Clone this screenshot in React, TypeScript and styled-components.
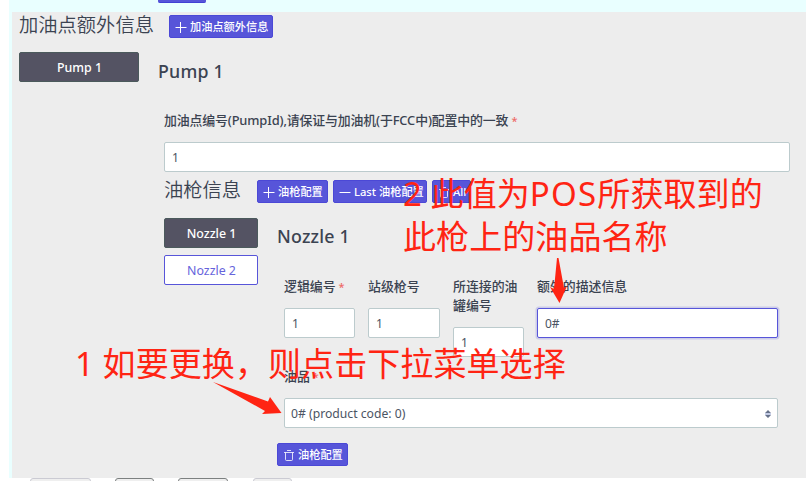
import React from "react";
import styled, { createGlobalStyle, css } from "styled-components";

const Global = createGlobalStyle`
  *, *::before, *::after { box-sizing: border-box; }
  body {
    margin: 0;
    background: #fff;
    overflow: hidden;
    font-family: "Noto Sans", "Noto Sans CJK SC", sans-serif;
    font-size: 12px;
    color: #3b4351;
  }
`;

const Page = styled.div`
  width: 806px;
  height: 481px;
  position: relative;
  overflow: hidden;
`;

const Frame = styled.div`
  margin-left: 9px;
  padding-left: 3px;
  height: 478px;
  background: #e9ffff;
`;

const TopStrip = styled.div`
  height: 12px;
  padding-left: 146px;
`;

const CutButton = styled.div`
  width: 48px;
  height: 3px;
  background: #5755d9;
  border-bottom: 1px solid #4240d4;
  border-radius: 0 0 2px 2px;
`;

const Panel = styled.main`
  height: 466px;
  background: #ededed;
  padding: 3px 0 0 7px;
`;

const TitleRow = styled.div<{ $top?: number }>`
  display: flex;
  height: 23px;
  margin-top: ${(p) => p.$top ?? 0}px;
`;

const Title = styled.h2<{ $width: number }>`
  margin: 0;
  width: ${(p) => p.$width}px;
  flex: none;
  font-family: "Noto Sans CJK SC", sans-serif;
  font-size: 19.3px;
  font-weight: 350;
  line-height: 19px;
  white-space: nowrap;
`;

const SmallButton = styled.button<{ $width: number }>`
  width: ${(p) => p.$width}px;
  height: 23px;
  flex: none;
  margin: 0 5px 0 0;
  padding: 1px 0 0 5px;
  display: flex;
  align-items: center;
  gap: 3px;
  background: #5755d9;
  border: 1px solid #4b48d6;
  border-radius: 2px;
  color: #fff;
  font: 500 11.2px/20px "Noto Sans", "Noto Sans CJK SC", sans-serif;
  white-space: nowrap;
  svg { flex: none; }
`;

const Columns = styled.div<{ $top: number }>`
  display: flex;
  margin-top: ${(p) => p.$top}px;
`;

const Tabs = styled.nav<{ $width: number }>`
  width: ${(p) => p.$width}px;
  flex: none;
  display: flex;
  flex-direction: column;
  gap: 7px;
`;

const Tab = styled.button<{ $active?: boolean }>`
  height: 30px;
  padding: 2px 0 0 1px;
  border-radius: 2px;
  font: 400 12.4px/26px "Noto Sans", sans-serif;
  ${(p) =>
    p.$active
      ? css`background: #545363; border: 1px solid #4b5a5c; color: #fff; font-weight: 500;`
      : css`background: #fff; border: 1px solid #5755d9; color: #6664dc;`}
`;

const PumpBody = styled.section`
  width: 632px;
  margin-left: 19px;
  padding-top: 6px;
`;

const NozzleBody = styled.section`
  width: 501px;
  margin-left: 19px;
  padding-top: 5px;
`;

const Heading = styled.h3`
  margin: 0;
  font: 500 17.8px/26px "Noto Sans", sans-serif;
  letter-spacing: 0.2px;
`;

const PumpFields = styled.div`
  padding: 27px 0 0 6px;
`;

const NozzleFields = styled.div`
  display: grid;
  grid-template-columns: 71px 72px 71px 241px;
  column-gap: 13px;
  height: 90px;
  margin: 28px 0 0 7px;
`;

const FieldBox = styled.label`
  display: block;
`;

const Caption = styled.span`
  display: block;
  margin-bottom: 12px;
  font-family: "Noto Sans", "Noto Sans CJK SC", sans-serif;
  font-size: 12.9px;
  font-weight: 500;
  line-height: 19px;
`;

const TightLabel = styled.span`
  letter-spacing: -0.14px;
`;

const Required = styled.span`
  color: #ee6a66;
  font-size: 11px;
`;

const Input = styled.input<{ $focus?: boolean }>`
  display: block;
  width: 100%;
  height: 30px;
  padding: 1px 7px 0;
  border: 1px solid ${(p) => (p.$focus ? "#5755d9" : "#bccbcd")};
  border-radius: 2px;
  background: #fff;
  outline: none;
  box-shadow: ${(p) => (p.$focus ? "0 0 0 1.5px rgba(87,85,217,.22)" : "none")};
  color: #4b5463;
  font: 400 12px/20px "Noto Sans", sans-serif;
`;

const ProductField = styled.div`
  margin: 0 0 0 7px;
`;

const SelectBox = styled.div`
  display: flex;
  align-items: center;
  justify-content: space-between;
  height: 30px;
  width: 494px;
  padding: 1px 6px 0;
  background: #fff;
  border: 1px solid #bccbcd;
  border-radius: 2px;
  font-size: 12.2px;
  color: #4b5463;
`;

const RemoveRow = styled.div`
  margin-top: 15px;
`;

const Footer = styled.div`
  display: flex;
  height: 3px;
  overflow: hidden;
  padding-left: 30px;
`;

const FooterButton = styled.div<{ $width: number; $gap: number; $dim?: boolean }>`
  width: ${(p) => p.$width}px;
  height: 20px;
  flex: none;
  margin-right: ${(p) => p.$gap}px;
  border: 1px solid ${(p) => (p.$dim ? "#cbcbd3" : "#7c8080")};
  border-radius: 3px;
  background: #efefef;
`;

const Note = styled.div<{ $x: number; $y: number }>`
  position: absolute;
  left: ${(p) => p.$x}px;
  top: ${(p) => p.$y}px;
  color: #ff2413;
  font: 400 33px/43px "Noto Sans", "Noto Sans CJK SC", sans-serif;
  letter-spacing: 0.08px;
  white-space: nowrap;
`;

const WideLatin = styled.span`
  letter-spacing: 1.2px;
`;

const Arrows = styled.svg`
  position: absolute;
  left: 0;
  top: 0;
  pointer-events: none;
`;

const Plus = () => (
  <svg width="12" height="12" viewBox="0 0 12 12" stroke="#fff" strokeWidth="1">
    <path d="M0.5 6.5H11.5M5.5 1V12" />
  </svg>
);
const Minus = () => (
  <svg width="12" height="12" viewBox="0 0 12 12" stroke="#fff" strokeWidth="1">
    <path d="M0.5 6.5H11.5" />
  </svg>
);
const Trash = () => (
  <svg width="12" height="12" viewBox="0 0 12 12" fill="none" stroke="#fff" strokeOpacity=".8">
    <path d="M1 3.5H11M4 1.5H8M2.5 3.5V10.5Q2.5 11.5 3.5 11.5H8.5Q9.5 11.5 9.5 10.5V3.5" />
  </svg>
);
const Chevrons = () => (
  <svg width="6" height="8" viewBox="0 0 6 8">
    <path d="M0 3L3 0L6 3ZM0 5H6L3 8Z" fill="#667189" />
    <path d="M0 3H6V5H0Z" fill="#c5cde6" />
  </svg>
);

type FieldProps = { label: React.ReactNode; value: string; required?: boolean; focus?: boolean };
const Field = ({ label, value, required, focus }: FieldProps) => (
  <FieldBox>
    <Caption>
      {label}
      {required && <Required> *</Required>}
    </Caption>
    <Input defaultValue={value} $focus={focus} />
  </FieldBox>
);

export default function App() {
  return (
    <Page>
      <Global />
      <Frame>
        <TopStrip>
          <CutButton />
        </TopStrip>
        <Panel>
          <TitleRow>
            <Title $width={150}>加油点额外信息</Title>
            <SmallButton $width={104}><Plus />加油点额外信息</SmallButton>
          </TitleRow>
          <Columns $top={14}>
            <Tabs $width={120}>
              <Tab $active>Pump 1</Tab>
            </Tabs>
            <PumpBody>
              <Heading>Pump 1</Heading>
              <PumpFields>
                <Field
                  label={<TightLabel>加油点编号(PumpId),请保证与加油机(于FCC中)配置中的一致 </TightLabel>}
                  value="1"
                  required
                />
                <TitleRow $top={8}>
                  <Title $width={93}>油枪信息</Title>
                  <SmallButton $width={71}><Plus />油枪配置</SmallButton>
                  <SmallButton $width={94}><Minus />Last 油枪配置</SmallButton>
                  <SmallButton $width={39}><Trash />All</SmallButton>
                </TitleRow>
                <Columns $top={15}>
                  <Tabs $width={94}>
                    <Tab $active>Nozzle 1</Tab>
                    <Tab>Nozzle 2</Tab>
                  </Tabs>
                  <NozzleBody>
                    <Heading>Nozzle 1</Heading>
                    <NozzleFields>
                      <Field label="逻辑编号" value="1" required />
                      <Field label="站级枪号" value="1" />
                      <Field label="所连接的油罐编号" value="1" />
                      <Field label="额外的描述信息" value="0#" focus />
                    </NozzleFields>
                    <ProductField>
                      <Caption>油品<Required> *</Required></Caption>
                      <SelectBox>0# (product code: 0)<Chevrons /></SelectBox>
                    </ProductField>
                    <RemoveRow>
                      <SmallButton $width={71}><Trash />油枪配置</SmallButton>
                    </RemoveRow>
                  </NozzleBody>
                </Columns>
              </PumpFields>
            </PumpBody>
          </Columns>
        </Panel>
      </Frame>
      <Footer>
        <FooterButton $width={61} $gap={24} $dim />
        <FooterButton $width={39} $gap={24} />
        <FooterButton $width={50} $gap={25} />
        <FooterButton $width={39} $gap={0} $dim />
      </Footer>
      <Note $x={403} $y={172}>2 此值为<WideLatin>POS</WideLatin>所获取到的<br />此枪上的油品名称</Note>
      <Note $x={75} $y={342}>1 如要更换，则点击下拉菜单选择</Note>
      <Arrows width="806" height="481" fill="#ff2413">
        <path d="M557 258L558.5 258L564 288L567 286L559.5 303L550 287L554 289Z" />
        <path d="M213 382L268 401.5L270 397L281.5 413L262 414L265 411Z" />
      </Arrows>
    </Page>
  );
}
